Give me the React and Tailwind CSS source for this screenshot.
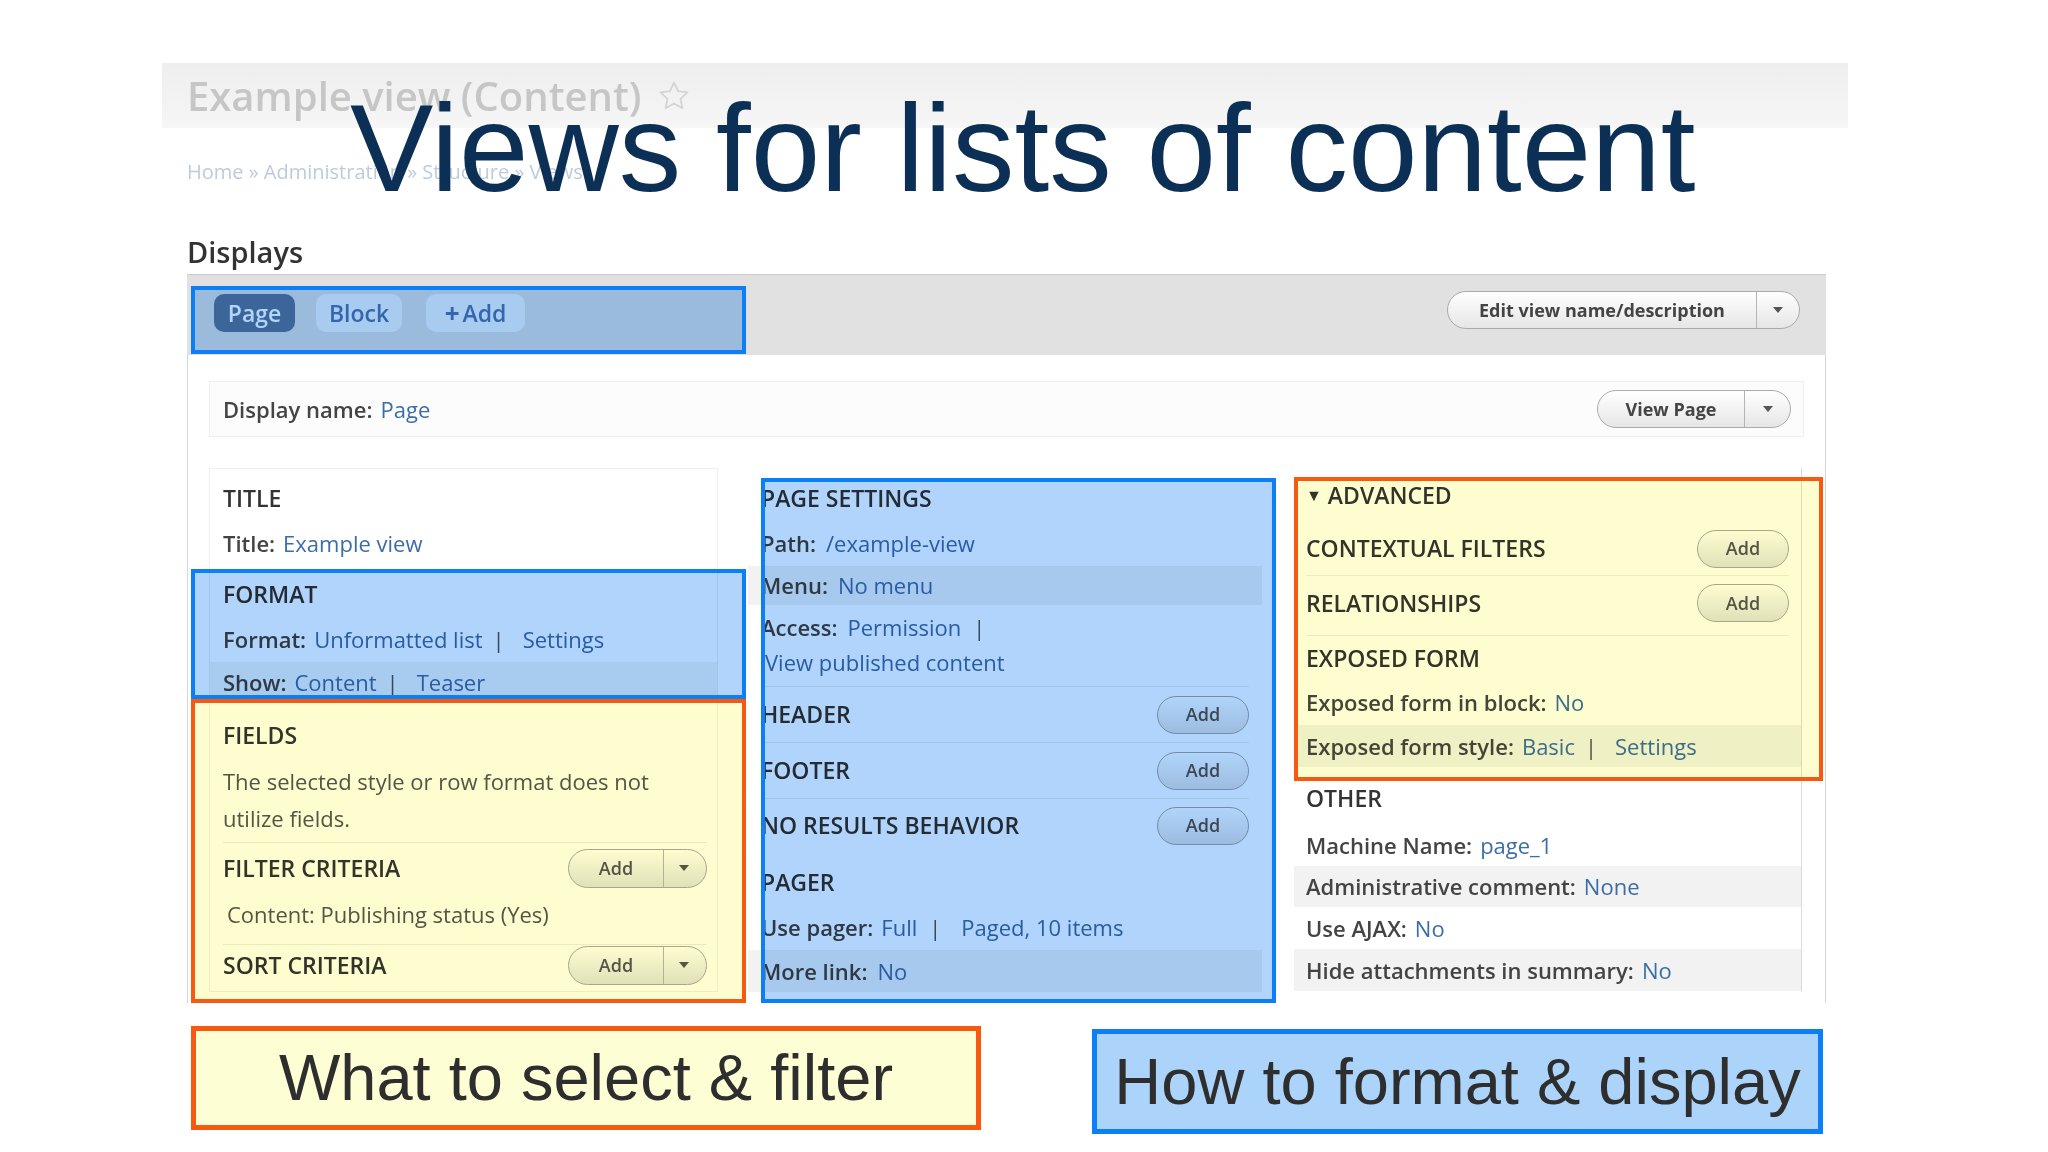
import React from 'react';

// Slide: Drupal Views UI screenshot with annotation boxes on top.

const heading = "text-[23px] font-semibold uppercase text-[#333]";
const lbl = "font-semibold text-[#444]";
const link = "text-[#3b6ea8]";

const Caret = () => (
  <svg width="10" height="6" viewBox="0 0 10 6">
    <path d="M0 0h10L5 6z" fill="#555" />
  </svg>
);

const Star = () => (
  <svg width="34" height="34" viewBox="0 0 24 24" fill="none" stroke="#d4d4d4" strokeWidth="1.3" strokeLinejoin="round">
    <path d="M12 2.5l2.9 6.1 6.6.8-4.9 4.6 1.3 6.6L12 17.3l-5.9 3.3 1.3-6.6-4.9-4.6 6.6-.8z" />
  </svg>
);

const AddButton = () => (
  <button className="flex h-[38px] w-[92px] items-center justify-center rounded-full border border-[#a8a8a8] bg-linear-to-b from-white to-[#e3e3e3] text-[18px] font-semibold text-[#555] shadow-[inset_0_1px_0_#fff]">
    Add
  </button>
);

const SplitAdd = () => (
  <div className="flex h-[39px] w-[139px] items-stretch rounded-full border border-[#a8a8a8] bg-linear-to-b from-white to-[#e3e3e3] text-[18px] font-semibold text-[#555]">
    <span className="flex w-[95px] items-center justify-center border-r border-[#b5b5b5]">Add</span>
    <span className="flex flex-1 items-center justify-center pr-[3px]"><Caret /></span>
  </div>
);

const Row = ({ className, children }) => (
  <div className={`flex items-center whitespace-nowrap ${className}`}>{children}</div>
);

// annotation overlay: tinted fill (multiply) plus solid border
const Mark = ({ box, fill, border }) => (
  <>
    <div className={`pointer-events-none absolute mix-blend-multiply ${box} ${fill}`} />
    <div className={`pointer-events-none absolute border-[4px] ${box} ${border}`} />
  </>
);

const LeftColumn = () => (
  <div className="flex w-[509px] flex-col border border-[#efefef] pt-[7px] pl-[13px] pr-[10px] text-[22px]">
    <Row className={`h-[44px] ${heading}`}>Title</Row>
    <Row className="h-[46px]"><span className={lbl}>Title:</span><span className={`ml-[8px] ${link}`}>Example view</span></Row>
    <div className="h-[6px]" />
    <Row className={`h-[44px] ${heading}`}>Format</Row>
    <Row className="h-[46px]">
      <span className={lbl}>Format:</span><span className={`ml-[8px] ${link}`}>Unformatted list</span>
      <span className="ml-[10px] text-[#555]">|</span><span className={`ml-[18px] ${link}`}>Settings</span>
    </Row>
    <Row className="-ml-[13px] -mr-[10px] h-[40px] bg-[#f4f4f4] pl-[13px]">
      <span className={lbl}>Show:</span><span className={`ml-[8px] ${link}`}>Content</span>
      <span className="ml-[10px] text-[#555]">|</span><span className={`ml-[18px] ${link}`}>Teaser</span>
    </Row>
    <div className="h-[11px]" />
    <Row className={`h-[44px] ${heading}`}>Fields</Row>
    <p className="mt-[6px] h-[74px] w-[470px] leading-[37px] text-[#555]">The selected style or row format does not utilize fields.</p>
    <div className="h-[6px] border-b border-[#ececec]" />
    <Row className="h-[50px] justify-between">
      <span className={heading}>Filter criteria</span><SplitAdd />
    </Row>
    <Row className="h-[42px] pl-[4px] text-[#555]">Content: Publishing status (Yes)</Row>
    <div className="h-[10px] border-b border-[#ececec]" />
    <Row className="h-[40px] justify-between">
      <span className={heading}>Sort criteria</span><SplitAdd />
    </Row>
  </div>
);

const MiddleColumn = () => (
  <div className="flex w-[514px] flex-col pt-[8px] pl-[13px] pr-[13px] text-[22px]">
    <Row className={`h-[44px] ${heading}`}>Page settings</Row>
    <Row className="h-[46px]"><span className={lbl}>Path:</span><span className={`ml-[10px] ${link}`}>/example-view</span></Row>
    <Row className="-ml-[13px] -mr-[13px] h-[39px] bg-[#f2f2f2] pl-[13px]"><span className={lbl}>Menu:</span><span className={`ml-[10px] ${link}`}>No menu</span></Row>
    <div className="h-[81px] pt-[5px] leading-[35px]">
      <div><span className={lbl}>Access:</span><span className={`ml-[10px] ${link}`}>Permission</span><span className="ml-[12px] text-[#555]">|</span></div>
      <div className={`pl-[4px] ${link}`}>View published content</div>
    </div>
    <Row className="h-[56px] justify-between border-t border-[#ededed]"><span className={heading}>Header</span><AddButton /></Row>
    <Row className="h-[56px] justify-between border-t border-[#ededed]"><span className={heading}>Footer</span><AddButton /></Row>
    <Row className="h-[54px] justify-between border-t border-[#ededed]"><span className={heading}>No results behavior</span><AddButton /></Row>
    <div className="h-[8px]" />
    <Row className={`h-[44px] ${heading}`}>Pager</Row>
    <Row className="h-[46px]">
      <span className={lbl}>Use pager:</span><span className={`ml-[8px] ${link}`}>Full</span>
      <span className="ml-[12px] text-[#555]">|</span><span className={`ml-[20px] ${link}`}>Paged, 10 items</span>
    </Row>
    <Row className="-ml-[13px] -mr-[13px] h-[42px] bg-[#f2f2f2] pl-[13px]"><span className={lbl}>More link:</span><span className={`ml-[10px] ${link}`}>No</span></Row>
  </div>
);

const RightColumn = () => (
  <div className="flex w-[508px] flex-col border-r border-[#dcdcdc] pt-[5px] pl-[12px] pr-[12px] text-[22px]">
    <Row className={`h-[44px] ${heading}`}><span className="mr-[6px] text-[16px]">▼</span>Advanced</Row>
    <div className="h-[5px]" />
    <Row className="h-[54px] justify-between border-b border-[#ededed]"><span className={heading}>Contextual filters</span><AddButton /></Row>
    <Row className="h-[54px] justify-between"><span className={heading}>Relationships</span><AddButton /></Row>
    <div className="h-[6px] border-b border-[#ededed]" />
    <Row className={`h-[44px] ${heading}`}>Exposed form</Row>
    <Row className="h-[45px]"><span className={lbl}>Exposed form in block:</span><span className={`ml-[8px] ${link}`}>No</span></Row>
    <Row className="-ml-[12px] -mr-[12px] h-[42px] bg-[#f2f2f2] pl-[12px]">
      <span className={lbl}>Exposed form style:</span><span className={`ml-[8px] ${link}`}>Basic</span>
      <span className="ml-[10px] text-[#555]">|</span><span className={`ml-[18px] ${link}`}>Settings</span>
    </Row>
    <div className="h-[9px]" />
    <Row className={`h-[44px] ${heading}`}>Other</Row>
    <div className="h-[4px]" />
    <Row className="h-[42px]"><span className={lbl}>Machine Name:</span><span className={`ml-[8px] ${link}`}>page_1</span></Row>
    <Row className="-ml-[12px] -mr-[12px] h-[41px] bg-[#f2f2f2] pl-[12px]"><span className={lbl}>Administrative comment:</span><span className={`ml-[8px] ${link}`}>None</span></Row>
    <Row className="h-[42px]"><span className={lbl}>Use AJAX:</span><span className={`ml-[8px] ${link}`}>No</span></Row>
    <Row className="-ml-[12px] -mr-[12px] h-[42px] bg-[#f2f2f2] pl-[12px]"><span className={lbl}>Hide attachments in summary:</span><span className={`ml-[8px] ${link}`}>No</span></Row>
  </div>
);

const App = () => {
  return (
    <div className="relative h-[1152px] w-[2048px] overflow-hidden bg-white font-['Open_Sans',sans-serif]">
      {/* page header of the screenshot */}
      <div className="ml-[162px] mt-[63px] flex h-[65px] w-[1686px] items-center gap-[16px] bg-linear-to-b from-[#eeeeee] to-[#f6f6f6] pl-[25px]">
        <span className="text-[40px] font-semibold leading-none text-[#c6c6c6]">Example view (Content)</span>
        <Star />
      </div>
      <div className="ml-[187px] mt-[29px] h-[30px] text-[20px] leading-[30px] text-[#bccbe0]">
        Home » Administration » Structure » Views
      </div>
      <h2 className="ml-[187px] mt-[47px] h-[36px] text-[29px] font-semibold leading-[36px] text-[#333]">Displays</h2>

      <div className="ml-[187px] mt-[4px] w-[1639px]">
        <div className="flex h-[81px] items-start justify-between border-t border-[#cdcdcd] bg-[#e1e1e1] pl-[27px] pr-[26px]">
          <div className="mt-[19px] flex gap-[21px] text-[23px] font-semibold">
            <span className="flex h-[38px] w-[81px] items-center justify-center rounded-[10px] bg-[#57799c] text-white">Page</span>
            <span className="flex h-[38px] w-[86px] items-center justify-center rounded-[10px] bg-[#f4f4f4] text-[#4a7bb2]">Block</span>
            <span className="ml-[3px] flex h-[38px] w-[99px] items-center justify-center rounded-[10px] bg-[#f4f4f4] text-[#4a7bb2]">
              <span className="mr-[3px] text-[26px] font-bold leading-none">+</span>Add
            </span>
          </div>
          <div className="mt-[16px] flex h-[38px] w-[353px] items-stretch rounded-full border border-[#ababab] bg-linear-to-b from-white to-[#e6e6e6] text-[18px] font-bold text-[#444]">
            <span className="flex flex-1 items-center justify-center">Edit view name/description</span>
            <span className="flex w-[43px] items-center justify-center border-l border-[#b5b5b5]"><Caret /></span>
          </div>
        </div>

        <div className="h-[648px] border-x border-[#d6d6d6] bg-white px-[21px] pt-[26px]">
          <div className="flex h-[56px] items-center justify-between border border-[#efefef] bg-[#fcfcfc] pl-[13px] pr-[12px] text-[22px]">
            <div><span className={lbl}>Display name:</span><span className={`ml-[8px] ${link}`}>Page</span></div>
            <div className="flex h-[38px] w-[194px] items-stretch rounded-full border border-[#ababab] bg-linear-to-b from-white to-[#e6e6e6] text-[18px] font-bold text-[#444]">
              <span className="flex flex-1 items-center justify-center">View Page</span>
              <span className="flex w-[46px] items-center justify-center border-l border-[#b5b5b5]"><Caret /></span>
            </div>
          </div>
          <div className="mt-[31px] flex gap-[30px]">
            <LeftColumn />
            <div className="flex gap-[32px]">
              <MiddleColumn />
              <RightColumn />
            </div>
          </div>
        </div>
      </div>

      {/* captions */}
      <div className="ml-[191px] mt-[23px] flex items-start font-['Liberation_Sans',Arial,sans-serif]">
        <div className="flex h-[104px] w-[790px] items-center justify-center border-[5px] border-[#f6590f] bg-[#fefed5] text-[65px] whitespace-nowrap text-[#2e2e2e]">
          What to select &amp; filter
        </div>
        <div className="ml-[111px] mt-[3px] flex h-[105px] w-[731px] items-center justify-center border-[5px] border-[#0c7ff6] bg-[#acd3f9] text-[65px] whitespace-nowrap text-[#2e2e2e]">
          How to format &amp; display
        </div>
      </div>

      {/* annotation boxes over the screenshot */}
      <Mark box="left-[191px] top-[286px] h-[68px] w-[555px]" fill="bg-[#b0d4fb]" border="border-[#0c7ff6]" />
      <Mark box="left-[191px] top-[699px] h-[304px] w-[555px]" fill="bg-[#fdfdd0]" border="border-[#f6590f]" />
      <Mark box="left-[191px] top-[569px] h-[130px] w-[555px]" fill="bg-[#b0d4fb]" border="border-[#0c7ff6]" />
      <Mark box="left-[761px] top-[478px] h-[525px] w-[515px]" fill="bg-[#b0d4fb]" border="border-[#0c7ff6]" />
      <Mark box="left-[1294px] top-[477px] h-[304px] w-[529px]" fill="bg-[#fdfdd0]" border="border-[#f6590f]" />

      {/* slide title */}
      <h1 className="absolute left-[350px] top-[85px] whitespace-nowrap font-['Liberation_Sans',Arial,sans-serif] text-[125px] leading-none text-[#0c2f56]">
        Views for lists of content
      </h1>
    </div>
  );
};

export default App;
